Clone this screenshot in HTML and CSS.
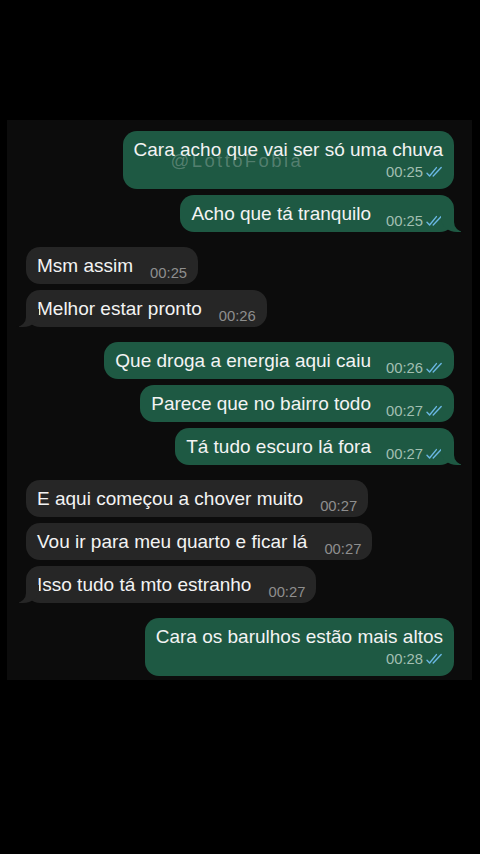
FILE: index.html
```html
<!DOCTYPE html>
<html lang="pt">
<head>
<meta charset="utf-8">
<link rel="stylesheet" href="styles.css">
</head>
<body>
<svg width="0" height="0" class="defs">
  <defs>
    <symbol id="ticks" viewBox="0 0 17 12">
      <path d="M1 7.2 L3.6 10 L10.4 1.6" fill="none" stroke="currentColor" stroke-width="1.4" stroke-linecap="round" stroke-linejoin="round"/>
      <path d="M7.2 10 L15.2 1.6" fill="none" stroke="currentColor" stroke-width="1.4" stroke-linecap="round" stroke-linejoin="round"/>
    </symbol>
  </defs>
</svg>
<main class="chat">
  <div class="msg out wide">
    <span class="text">Cara acho que vai ser só uma chuva</span>
    <span class="meta"><span class="time">00:25</span><svg class="tick"><use href="#ticks"/></svg></span>
    <span class="watermark">@LottoFobia</span>
  </div>
  <div class="msg out tail">
    <span class="text">Acho que tá tranquilo</span>
    <span class="meta"><span class="time">00:25</span><svg class="tick"><use href="#ticks"/></svg></span>
  </div>

  <div class="msg in group">
    <span class="text">Msm assim</span>
    <span class="meta"><span class="time">00:25</span></span>
  </div>
  <div class="msg in tail">
    <span class="text">Melhor estar pronto</span>
    <span class="meta"><span class="time">00:26</span></span>
  </div>

  <div class="msg out group">
    <span class="text">Que droga a energia aqui caiu</span>
    <span class="meta"><span class="time">00:26</span><svg class="tick"><use href="#ticks"/></svg></span>
  </div>
  <div class="msg out">
    <span class="text">Parece que no bairro todo</span>
    <span class="meta"><span class="time">00:27</span><svg class="tick"><use href="#ticks"/></svg></span>
  </div>
  <div class="msg out tail">
    <span class="text">Tá tudo escuro lá fora</span>
    <span class="meta"><span class="time">00:27</span><svg class="tick"><use href="#ticks"/></svg></span>
  </div>

  <div class="msg in group">
    <span class="text">E aqui começou a chover muito</span>
    <span class="meta"><span class="time">00:27</span></span>
  </div>
  <div class="msg in">
    <span class="text">Vou ir para meu quarto e ficar lá</span>
    <span class="meta"><span class="time">00:27</span></span>
  </div>
  <div class="msg in tail">
    <span class="text">Isso tudo tá mto estranho</span>
    <span class="meta"><span class="time">00:27</span></span>
  </div>

  <div class="msg out wide group">
    <span class="text">Cara os barulhos estão mais altos</span>
    <span class="meta"><span class="time">00:28</span><svg class="tick"><use href="#ticks"/></svg></span>
  </div>
</main>
</body>
</html>
```

FILE: styles.css
```css
html, body {
  margin: 0;
  padding: 0;
  background: #000;
}
body {
  width: 480px;
  height: 854px;
  overflow: hidden;
  font-family: "Liberation Sans", Arial, "Helvetica", sans-serif;
  color: #f3f3f3;
}
.defs {
  position: absolute;
  width: 0;
  height: 0;
}
.chat {
  margin: 120px 8px 0 7px;
  height: 560px;
  box-sizing: border-box;
  background: #0c0c0c;
  padding: 11px 18px 0 19px;
  display: flex;
  flex-direction: column;
  gap: 6px;
}
.msg {
  position: relative;
  display: flex;
  align-items: flex-end;
  gap: 15px;
  padding: 7px 11px 7px 11px;
  border-radius: 14px;
  max-width: 340px;
}
.msg.group {
  margin-top: 9px;
}
.msg.out {
  align-self: flex-end;
  background: #1e5943;
}
.msg.in {
  align-self: flex-start;
  background: #262626;
  gap: 17px;
  padding-right: 11px;
}
.text {
  font-size: 19px;
  line-height: 23px;
  white-space: nowrap;
}
.meta {
  display: flex;
  align-items: center;
  gap: 3px;
  font-size: 14.8px;
  line-height: 16px;
  margin-bottom: -4px;
  white-space: nowrap;
}
.out .time {
  color: #a2bfb1;
}
.in .time {
  color: #8e8e8e;
}
.tick {
  width: 17px;
  height: 12px;
  color: #6ab7e3;
}
.msg.wide {
  flex-direction: column;
  align-items: stretch;
  gap: 0;
}
.msg.wide .meta {
  align-self: flex-end;
  line-height: 20px;
  margin-bottom: 0;
  margin-top: 1px;
}
.watermark {
  position: absolute;
  left: 48px;
  top: 19px;
  font-size: 18.5px;
  letter-spacing: 2.4px;
  color: rgba(200, 210, 205, 0.32);
  pointer-events: none;
}
/* tails */
.msg.tail::before,
.msg.tail::after {
  content: "";
  position: absolute;
  bottom: 0;
  height: 18px;
}
.msg.out.tail::before {
  right: -7px;
  width: 20px;
  background: #1e5943;
  border-bottom-left-radius: 16px 14px;
}
.msg.out.tail::after {
  right: -12px;
  width: 12px;
  background: #0c0c0c;
  border-bottom-left-radius: 10px;
}
.msg.in.tail::before {
  left: -7px;
  width: 20px;
  background: #262626;
  border-bottom-right-radius: 16px 14px;
}
.msg.in.tail::after {
  left: -12px;
  width: 12px;
  background: #0c0c0c;
  border-bottom-right-radius: 10px;
}
```
